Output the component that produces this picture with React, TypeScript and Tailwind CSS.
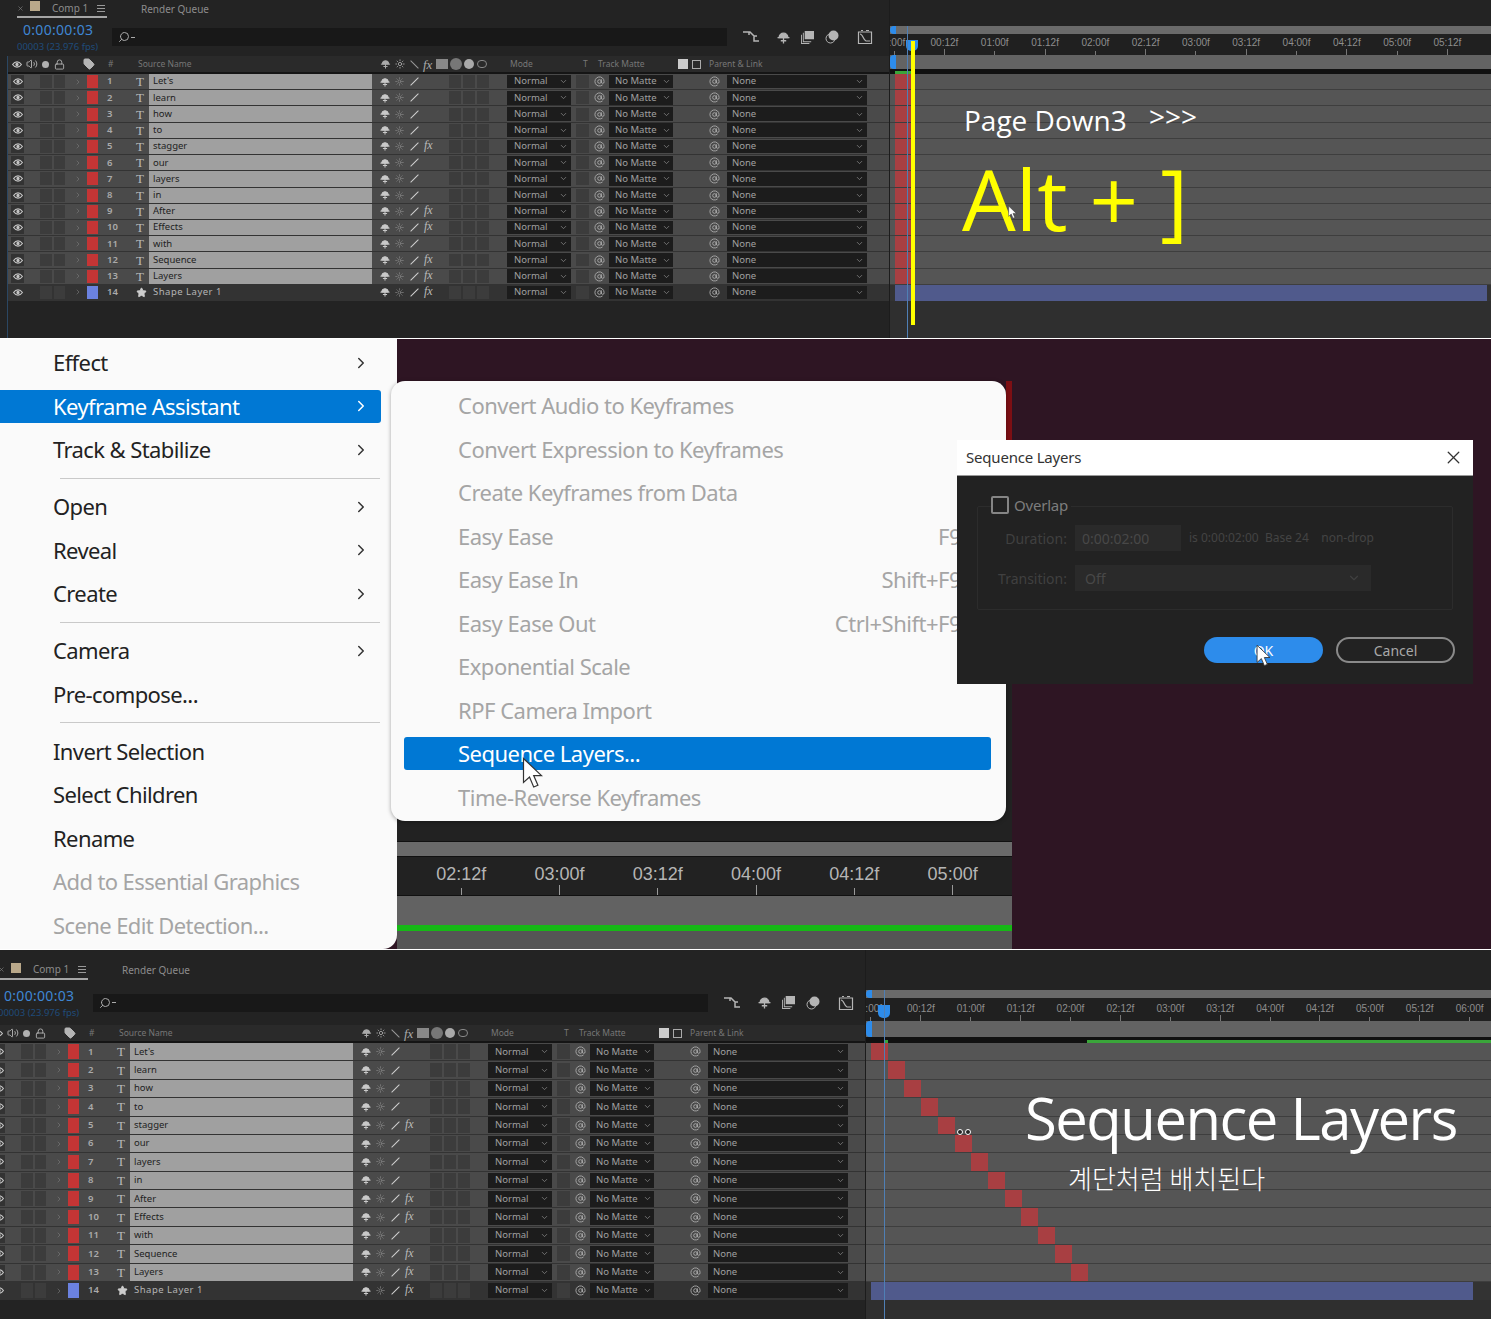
import { AtSign, ChevronDown, ChevronRight, Lock, Search, Star, Sun, Tag, Volume2, X } from 'lucide-react'

const layers = ['Let\'s', 'learn', 'how', 'to', 'stagger', 'our', 'layers', 'in', 'After', 'Effects', 'with', 'Sequence', 'Layers', 'Shape Layer 1']
const hasFx = [4, 8, 9, 11, 12, 13]

const ui = { fontFamily: '"Noto Sans", "Liberation Sans", sans-serif' }

function ShyIcon({ className }: { className?: string }) {
  return (
    <svg viewBox="0 0 12 12" className={className} fill="none" stroke="currentColor" strokeWidth="1.2">
      <path d="M2 6a4 4 0 0 1 8 0z" fill="currentColor" />
      <path d="M.5 6.2h11M6 6v5.5M3.5 9h5" />
    </svg>
  )
}

function EyeIcon() {
  return (
    <svg viewBox="0 0 12 8" className="w-[10px] h-[7px]" fill="none" stroke="#c4c4c4" strokeWidth="1.4">
      <path d="M.7 4C2.5 1.4 4 .8 6 .8s3.5.6 5.3 3.2C9.500 6.600 8 7.200 6 7.200S2.500 6.600.7 4z" />
      <circle cx="6" cy="4" r="1.300" fill="#c4c4c4" />
    </svg>
  )
}

function PointerIcon({ className }: { className?: string }) {
  return (
    <svg viewBox="0 0 14 22" className={className}>
      <path d="M1 1v16l4-3.600 2.800 6.600 2.800-1.200-2.800-6.400H13z" fill="currentColor" stroke="#333" strokeWidth="0.8" />
    </svg>
  )
}

function FxMark({ className }: { className: string }) {
  return <span className={className} style={{ fontFamily: '"Liberation Serif", serif' }}><i>fx</i></span>
}

function ToolbarIcons() {
  return (
    <div className="flex items-center text-[#b5b5b5]">
      <svg viewBox="0 0 18 14" className="w-[18px] h-[14px]" fill="none" stroke="currentColor" strokeWidth="1.5">
        <path d="M0 2h7l4 4h3M11 6v5h5M6 2v3" />
      </svg>
      <ShyIcon className="w-[15px] h-[13px] ml-[15px]" />
      <svg viewBox="0 0 14 14" className="w-[13px] h-[13px] ml-[10px]" fill="currentColor">
        <path d="M4 0h10v9H4zM2 2h1v9h8v1H2zM0 4h1v9h8v1H0z" />
      </svg>
      <svg viewBox="0 0 14 14" className="w-[14px] h-[14px] ml-[11px]" fill="currentColor">
        <circle cx="8.500" cy="5.500" r="5" />
        <circle cx="5.500" cy="8.500" r="4.500" fill="none" stroke="currentColor" />
      </svg>
      <svg viewBox="0 0 16 16" className="w-[16px] h-[16px] ml-[18px]" fill="none" stroke="currentColor" strokeWidth="1.2">
        <path d="M1.500 3h13v11.500h-13zM3 5c3 0 3 6 6 7h4M4 1.500h2M9 1.500h3" />
      </svg>
    </div>
  )
}

function HeaderRow() {
  return (
    <div className="h-[18px] flex items-center bg-[#2a2a2a] border-b-2 border-[#151515] text-[8.500px] text-[#777]">
      <div className="ml-[4px] w-[12px] flex"><EyeIcon /></div>
      <Volume2 className="ml-[2px] w-[12px] h-[12px] text-[#aaa]" />
      <div className="ml-[4px] w-[7px] h-[7px] rounded-full bg-[#b0b0b0]" />
      <Lock className="ml-[5px] w-[11px] h-[11px] text-[#b0b0b0]" />
      <Tag className="ml-[18px] w-[12px] h-[12px] fill-[#b5b5b5] text-[#b5b5b5]" />
      <span className="ml-[13px] w-[30px]">#</span>
      <span className="w-[242px]">Source Name</span>
      <ShyIcon className="w-[11px] h-[10px] text-[#aaa]" />
      <Sun className="ml-[4px] w-[10px] h-[10px] text-[#aaa]" />
      <span className="ml-[4px] w-[11px] h-[1px] bg-[#999] rotate-45" />
      <FxMark className="ml-[3px] w-[13px] text-[13px] leading-none text-[#aaa]" />
      <div className="w-[12px] h-[10px] bg-[#888]" />
      <div className="ml-[2px] w-[12px] h-[12px] rounded-full bg-[#777]" />
      <div className="ml-[2px] w-[10px] h-[10px] rounded-full bg-[#aaa]" />
      <div className="ml-[3px] w-[10px] h-[8px] rounded-full border border-[#888]" />
      <span className="ml-[23px] w-[73px]">Mode</span>
      <span className="w-[15px]">T</span>
      <span className="w-[80px]">Track Matte</span>
      <div className="w-[10px] h-[10px] bg-[#ccc]" />
      <div className="ml-[4px] w-[9px] h-[9px] border border-[#aaa]" />
      <span className="ml-[8px]">Parent &amp; Link</span>
    </div>
  )
}

function LayerRow({ index, name, rowClass }: { index: number; name: string; rowClass: string }) {
  const isShape = index === 13
  const boxClass = 'h-[85%] bg-[#3c3c3c]'
  return (
    <div className={`${rowClass} flex items-center border-b border-[#333] text-[9.500px] ${isShape ? 'bg-[#333]' : 'bg-[#4a4a4a]'}`}>
      <div className="ml-[3px] w-[13px] h-[85%] bg-[#333] flex items-center justify-center"><EyeIcon /></div>
      <div className={`ml-[16px] w-[12px] ${boxClass}`} />
      <div className={`ml-[2px] w-[11px] ${boxClass}`} />
      <ChevronRight className="ml-[9px] w-[8px] h-[8px] text-[#777]" />
      <div className={`ml-[5px] w-[11px] h-[85%] ${isShape ? 'bg-[#6b82e0]' : 'bg-[#c43535]'}`} />
      <span className="ml-[9px] w-[29px] text-[#aaa] font-semibold">{index + 1}</span>
      <div className="w-[13px] flex items-center">
        {isShape ? (
          <Star className="w-[11px] h-[11px] fill-[#ccc] text-[#ccc]" />
        ) : (
          <span className="text-[13px] leading-none text-[#bbb]" style={{ fontFamily: '"Liberation Serif", serif' }}>T</span>
        )}
      </div>
      <div className={`w-[223px] h-full pl-[4px] flex items-center ${isShape ? 'text-[#b5b5b5] tracking-[0.5px]' : 'bg-[#a0a0a0] text-[#1e1e1e]'}`}>{name}</div>
      <ShyIcon className="ml-[7px] w-[12px] h-[10px] text-[#c9c9c9]" />
      <Sun className="ml-[4px] w-[9px] h-[9px] text-[#888]" />
      <span className="ml-[5px] w-[11px] h-[1px] bg-[#d0d0d0] -rotate-45" />
      <div className="ml-[4px] w-[11px]">
        {hasFx.includes(index) && <FxMark className="text-[12px] leading-none text-[#bbb]" />}
      </div>
      <div className={`ml-[14px] w-[12px] ${boxClass}`} />
      <div className={`ml-[2px] w-[12px] ${boxClass}`} />
      <div className={`ml-[2px] w-[12px] ${boxClass}`} />
      <div className="ml-[18px] w-[64px] h-[90%] bg-[#1c1c1c] text-[#a0a0a0] pl-[7px] flex items-center justify-between pr-[3px]">
        Normal <ChevronDown className="w-[9px] h-[9px] text-[#888]" />
      </div>
      <div className={`ml-[5px] w-[13px] ${boxClass}`} />
      <AtSign className="ml-[5px] w-[11px] h-[11px] text-[#aaa]" />
      <div className="ml-[4px] w-[64px] h-[90%] bg-[#1c1c1c] text-[#a0a0a0] pl-[6px] flex items-center justify-between pr-[2px]">
        No Matte <ChevronDown className="w-[9px] h-[9px] text-[#888]" />
      </div>
      <AtSign className="ml-[36px] w-[11px] h-[11px] text-[#aaa]" />
      <div className="ml-[7px] w-[140px] h-[90%] bg-[#1c1c1c] text-[#a0a0a0] pl-[5px] flex items-center justify-between pr-[3px]">
        None <ChevronDown className="w-[9px] h-[9px] text-[#888]" />
      </div>
    </div>
  )
}

function Ruler({ labels, className, labelClass, innerClass }: { labels: string[]; className: string; labelClass: string; innerClass: string }) {
  return (
    <div className={`bg-[#202020] overflow-hidden ${className}`} style={{ fontFamily: '"Liberation Sans", sans-serif' }}>
      <div className={`flex h-full ${innerClass}`}>
        {labels.map((label, i) => (
          <div key={label} className={`${labelClass} shrink-0 flex flex-col items-center justify-end text-[10px] leading-none text-[#8e8e8e]`}>
            <span>{label}</span>
            <div className="h-[7px] flex items-end">
              <div className={`w-px bg-[#777] ${i % 2 === 0 ? 'h-[4px]' : 'h-[6px]'}`} />
            </div>
          </div>
        ))}
      </div>
    </div>
  )
}

type PanelProps = {
  shift: string
  leftWidth: string
  panelHeight: string
  tabClass: string
  toolbarClass: string
  rowClass: string
  headSpacer: string
  navClass: string
  rulerClass: string
  rulerInner: string
  labelClass: string
  barClass: string
  stripClass: string
  firstGreen: string
  labels: string[]
  trackBar: (i: number) => { marginLeft: number; width: number }
  shapeBar: string
  stripGreen?: boolean
  children?: React.ReactNode
}

function CompPanel(p: PanelProps) {
  return (
    <section className={`relative ${p.panelHeight} overflow-hidden bg-[#232323] flex`} style={ui}>
      <div className={`${p.leftWidth} ${p.shift} shrink-0 flex flex-col`}>
        <div className={`${p.tabClass} flex text-[10px] text-[#8c8c8c]`}>
          <div className="ml-[17px] w-[90px] h-full flex items-center border-b-2 border-[#a5a5a5]">
            <X className="w-[7px] h-[7px] text-[#888]" />
            <div className="ml-[6px] w-[10px] h-[10px] bg-[#b9a88a] -translate-y-[2px]" />
            <span className="ml-[12px] w-[45px]">Comp 1</span>
            <div className="w-[8px] h-[7px] border-y border-[#999] flex items-center"><div className="w-full h-px bg-[#999]" /></div>
          </div>
          <span className="ml-[34px] self-center">Render Queue</span>
        </div>
        <div className={`${p.toolbarClass} flex items-center`}>
          <div className="ml-[17px] w-[95px] flex flex-col">
            <span className="ml-[6px] text-[14px] leading-[18px] text-[#3f86d2] tracking-[0.3px]">0:00:00:03</span>
            <span className="mt-[2px] text-[9.500px] leading-[12px] text-[#1f4b7a]">00003 (23.976 fps)</span>
          </div>
          <div className="w-[615px] h-[18px] bg-[#181818] flex items-center pl-[6px]">
            <Search className="w-[12px] h-[12px] text-[#aaa] -scale-x-100" />
            <span className="ml-[1px] w-[4px] h-px bg-[#aaa]" />
          </div>
          <div className="ml-[16px]"><ToolbarIcons /></div>
        </div>
        <div className="ml-[7px] flex-1 flex flex-col border-l border-[#2b4763]">
          <HeaderRow />
          <div className="flex flex-col">
            {layers.map((name, i) => <LayerRow key={name} index={i} name={name} rowClass={p.rowClass} />)}
          </div>
        </div>
      </div>
      <div className="flex-1 min-w-0 flex flex-col bg-[#2f2f2f] border-l border-[#1c1c1c]">
        <div className={`${p.headSpacer} bg-[#232323]`} />
        <div className={`${p.navClass} bg-[#6a6a6a] relative`}>
          <div className="absolute left-0 top-0 w-[6px] h-full rounded-l-full bg-[#2d8ceb]" />
        </div>
        <Ruler labels={p.labels} className={p.rulerClass} labelClass={p.labelClass} innerClass={p.rulerInner} />
        <div className={`${p.barClass} bg-[#636363] relative`}>
          <div className="absolute left-0 top-0 w-[6px] h-full rounded-l bg-[#2d8ceb]" />
        </div>
        <div className={`${p.stripClass} bg-[#111] flex items-end pl-[5px]`}>
          <div className={`${p.firstGreen} h-[3px] bg-[#3aa53a]`} />
          {p.stripGreen && <div className="ml-[199px] flex-1 h-[3px] bg-[#3aa53a]" />}
        </div>
        {layers.slice(0, 13).map((name, i) => (
          <div key={name} className={`${p.rowClass} bg-[#555] border-b border-[#3e3e3e]`}>
            <div className="h-full bg-[#a83f42]" style={p.trackBar(i)} />
          </div>
        ))}
        <div className={`${p.rowClass} bg-[#333] pl-[5px]`}>
          <div className={`${p.shapeBar} h-full bg-[#505a8c]`} />
        </div>
      </div>
      {p.children}
    </section>
  )
}

function Menu() {
  const groups: { label: string; sub?: boolean; active?: boolean; off?: boolean }[][] = [
    [{ label: 'Effect', sub: true }, { label: 'Keyframe Assistant', sub: true, active: true }, { label: 'Track & Stabilize', sub: true }],
    [{ label: 'Open', sub: true }, { label: 'Reveal', sub: true }, { label: 'Create', sub: true }],
    [{ label: 'Camera', sub: true }, { label: 'Pre-compose...' }],
    [{ label: 'Invert Selection' }, { label: 'Select Children' }, { label: 'Rename' }, { label: 'Add to Essential Graphics', off: true }, { label: 'Scene Edit Detection...', off: true }],
  ]
  return (
    <div className="w-[397px] h-full shrink-0 bg-[#fafafa] rounded-br-[14px] pt-[2px]">
      {groups.map((items, g) => (
        <div key={g}>
          {g > 0 && <div className="ml-[60px] w-[320px] h-[13.500px] flex items-center"><div className="w-full h-px bg-[#c9c9c9]" /></div>}
          {items.map((item) => (
            <div key={item.label} className="w-[381px] h-[43.500px] flex items-center">
              <div className={`w-full h-[33px] pl-[53px] pr-[11px] rounded-r-[3px] flex items-center justify-between text-[22px] tracking-[-0.6px] ${item.active ? 'bg-[#0078d4] text-white' : item.off ? 'text-[#a5a5a5]' : 'text-[#222]'}`}>
                {item.label}
                {item.sub && <ChevronRight className={`w-[18px] h-[18px] ${item.active ? 'text-white' : 'text-[#333]'}`} />}
              </div>
            </div>
          ))}
        </div>
      ))}
    </div>
  )
}

function KeyframeMenu() {
  const items: [string, string?][] = [
    ['Convert Audio to Keyframes'], ['Convert Expression to Keyframes'], ['Create Keyframes from Data'],
    ['Easy Ease', 'F9'], ['Easy Ease In', 'Shift+F9'], ['Easy Ease Out', 'Ctrl+Shift+F9'],
    ['Exponential Scale'], ['RPF Camera Import'], ['Sequence Layers...'], ['Time-Reverse Keyframes'],
  ]
  return (
    <div className="absolute left-[391px] top-[42px] w-[615px] h-[440px] bg-[#fafafa] rounded-[14px] shadow-[0_1px_4px_rgba(0,0,0,0.35)] pt-[3px] pl-[13px] pr-[15px]">
      {items.map(([label, key]) => {
        const active = label === 'Sequence Layers...'
        return (
          <div key={label} className="h-[43.500px] flex items-center">
            <div className={`w-full h-[33px] pl-[54px] rounded-[3px] flex items-center justify-between text-[22px] tracking-[-0.5px] ${active ? 'bg-[#0078d4] text-white' : 'text-[#a5a5a5]'}`}>
              {label}
              {key && <span className="mr-[30px]">{key}</span>}
            </div>
          </div>
        )
      })}
    </div>
  )
}

function SequenceDialog() {
  return (
    <div className="absolute left-[957px] top-[101px] w-[516px] h-[244px] bg-[#222] flex flex-col">
      <div className="h-[36px] shrink-0 bg-white border-b border-[#999] flex items-center justify-between pl-[9px] pr-[9px] text-[15px] tracking-[-0.2px] text-[#333]">
        Sequence Layers
        <X className="w-[21px] h-[21px] text-[#333]" strokeWidth={1.5} />
      </div>
      <div className="relative mx-[20px] mt-[30px] h-[104px] border border-[#2c2c2c] rounded-[2px] flex flex-col text-[14px] text-[#404040]">
        <div className="absolute -top-[13px] left-[13px] bg-[#222] flex items-center pr-[3px] text-[15px] tracking-[-0.2px] text-[#7d7d7d]">
          <div className="w-[18px] h-[18px] border-2 border-[#858585] rounded-[2px] mr-[5px]" />
          Overlap
        </div>
        <div className="mt-[18px] flex items-center">
          <span className="w-[89px] text-right">Duration:</span>
          <div className="ml-[8px] w-[106px] h-[26px] bg-[#2a2a2a] pl-[7px] flex items-center text-[#484848]">0:00:02:00</div>
          <span className="ml-[8px] text-[12px] text-[#444] whitespace-pre">is 0:00:02:00  Base 24    non-drop</span>
        </div>
        <div className="mt-[14px] flex items-center">
          <span className="w-[89px] text-right">Transition:</span>
          <div className="ml-[8px] w-[296px] h-[26px] bg-[#2a2a2a] px-[10px] flex items-center justify-between text-[#484848]">
            Off
            <ChevronDown className="w-[14px] h-[14px] text-[#404040]" />
          </div>
        </div>
      </div>
      <div className="mt-[27px] flex justify-end pr-[18px] gap-[13px] text-[14px]">
        <div className="w-[119px] h-[26px] rounded-full bg-[#2d8ceb] text-white flex items-center justify-center">OK</div>
        <div className="w-[119px] h-[26px] rounded-full border-2 border-[#8a8a8a] text-[#a8a8a8] flex items-center justify-center">Cancel</div>
      </div>
      <PointerIcon className="absolute left-[299px] top-[204px] w-[15px] h-[24px] text-white" />
    </div>
  )
}

function MiddleTimeline() {
  const labels = ['02:12f', '03:00f', '03:12f', '04:00f', '04:12f', '05:00f']
  return (
    <div className="w-[615px] shrink-0 mt-[102px] flex flex-col bg-[#222]">
      <div className="flex-1" />
      <div className="h-[16px] bg-[#6a6a6a] border-y border-[#111]" />
      <div className="h-[39px] bg-[#222] border-b border-[#111] flex pl-[15px]" style={{ fontFamily: '"Liberation Sans", sans-serif' }}>
        {labels.map((label, i) => (
          <div key={label} className="w-[98.300px] shrink-0 flex flex-col items-center justify-end text-[18px] leading-none text-[#b5b5b5]">
            <span>{label}</span>
            <div className="h-[12px] flex items-end">
              <div className={`w-px bg-[#999] ${i % 2 === 0 ? 'h-[7px]' : 'h-[10px]'}`} />
            </div>
          </div>
        ))}
      </div>
      <div className="h-[29px] bg-[#626262]" />
      <div className="h-[6px] bg-[#16b816]" />
      <div className="h-[18px] bg-[#555]" />
    </div>
  )
}

export default function App() {
  return (
    <div className="w-[1491px] h-[1319px] overflow-hidden bg-[#232323]" style={ui}>
      <CompPanel
        shift=""
        leftWidth="w-[889px]"
        panelHeight="h-[339px] border-b border-white"
        tabClass="h-[18px]"
        toolbarClass="h-[38px]"
        rowClass="h-[16.230px]"
        headSpacer="h-[26px]"
        navClass="h-[8px]"
        rulerClass="h-[21px]"
        rulerInner="-ml-[21px]"
        labelClass="w-[50.300px]"
        barClass="h-[14px]"
        stripClass="h-[5px]"
        firstGreen="w-[16px]"
        labels={['0:00f', '00:12f', '01:00f', '01:12f', '02:00f', '02:12f', '03:00f', '03:12f', '04:00f', '04:12f', '05:00f', '05:12f']}
        trackBar={() => ({ marginLeft: 5, width: 16 })}
        shapeBar="w-[592px]"
      >
        <div className="absolute left-[906px] top-[40px] w-[12px] h-[11px] rounded-b-[5px] bg-[#2d8ceb]" />
        <div className="absolute left-[907px] top-[26px] w-px h-[313px] bg-[#4f7fb5]" />
        <div className="absolute left-[911px] top-[41px] w-[4px] h-[284px] bg-[#ffff00]" />
        <div className="absolute left-[964px] top-[100px] text-[28px] leading-[40px] text-white whitespace-pre" style={{ fontFamily: '"Open Sans", sans-serif' }}>Page Down3</div>
        <div className="absolute left-[1149px] top-[96px] text-[28px] leading-[40px] text-white" style={{ fontFamily: '"Open Sans", sans-serif' }}>&gt;&gt;&gt;</div>
        <div className="absolute left-[962px] top-[138px] text-[85px] leading-[120px] text-[#ffff00] whitespace-pre" style={{ fontFamily: '"Open Sans", sans-serif' }}>Alt + ]</div>
        <PointerIcon className="absolute left-[1008px] top-[205px] w-[9px] h-[15px] text-white" />
      </CompPanel>

      <section className="relative h-[611px] bg-[#2e1523] flex border-b border-white" style={ui}>
        <Menu />
        <MiddleTimeline />
        <div className="absolute left-[1006px] top-[42px] w-[6px] h-[60px] bg-[#7d0f14]" />
        <KeyframeMenu />
        <SequenceDialog />
        <PointerIcon className="absolute left-[522px] top-[418px] w-[21px] h-[33px] text-white" />
      </section>

      <CompPanel
        shift="-ml-[19px]"
        leftWidth="w-[884px]"
        panelHeight="h-[369px]"
        tabClass="h-[30px] pt-[11px]"
        toolbarClass="h-[45px]"
        rowClass="h-[18.380px]"
        headSpacer="h-[40px]"
        navClass="h-[8px]"
        rulerClass="h-[23px]"
        rulerInner="-ml-[20px]"
        labelClass="w-[49.900px]"
        barClass="h-[16px]"
        stripClass="h-[6px]"
        firstGreen="ml-[13px] w-[4px]"
        labels={['0:00f', '00:12f', '01:00f', '01:12f', '02:00f', '02:12f', '03:00f', '03:12f', '04:00f', '04:12f', '05:00f', '05:12f', '06:00f']}
        trackBar={(i) => ({ marginLeft: 5 + i * 16.7, width: 17 })}
        shapeBar="w-[602px]"
        stripGreen
      >
        <div className="absolute left-[878px] top-[55px] w-[12px] h-[13px] rounded-b-[5px] bg-[#2d8ceb]" />
        <div className="absolute left-[884px] top-[40px] w-px h-[329px] bg-[#4f7fb5]" />
        <div className="absolute left-[1025px] top-[128px] text-[58px] leading-[80px] tracking-[-1.5px] text-white whitespace-pre" style={{ fontFamily: '"Open Sans", sans-serif' }}>Sequence Layers</div>
        <div className="absolute left-[1068px] top-[210px] text-[26px] leading-[36px] text-white font-light whitespace-pre" style={{ fontFamily: '"Noto Sans CJK KR", sans-serif' }}>계단처럼 배치된다</div>
        <div className="absolute left-[957px] top-[179px] flex gap-[2px]">
          <div className="w-[6px] h-[6px] rounded-full border border-white bg-[#222]" />
          <div className="w-[6px] h-[6px] rounded-full border border-white bg-[#222]" />
        </div>
      </CompPanel>
    </div>
  )
}
